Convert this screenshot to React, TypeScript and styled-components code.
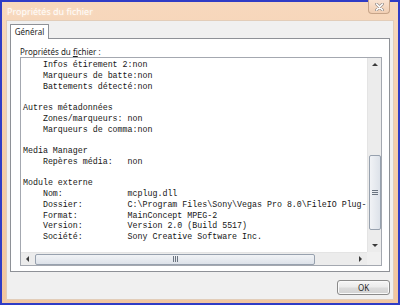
import React from "react";
import styled, { createGlobalStyle } from "styled-components";

const Global = createGlobalStyle`
  html, body { margin: 0; padding: 0; background: #fff; }
  #root { width: 400px; height: 305px; }
`;

const Window = styled.div`
  box-sizing: border-box;
  width: 400px;
  height: 305px;
  border: 2px solid #2f3cc6;
  background: linear-gradient(180deg, #f7d8bd 0%, #f3cba7 60%, #f1c6a0 100%);
  padding: 0 4px 3px 4px;
  display: flex;
  flex-direction: column;
  font-family: "Noto Sans", "DejaVu Sans", sans-serif;
`;

const TitleBar = styled.div`
  height: 18px;
  display: flex;
  align-items: flex-start;
  justify-content: space-between;
  flex: none;
`;

const Title = styled.div`
  margin-top: 4px;
  margin-left: 1px;
  font-size: 9px;
  line-height: 11px;
  color: rgba(255, 255, 255, 0.92);
  text-shadow: 0 0 3px rgba(255, 240, 225, 0.9);
`;

const CloseButton = styled.div`
  box-sizing: border-box;
  width: 22px;
  height: 14px;
  margin-top: -2px;
  margin-right: 4px;
  border: 1px solid #c7a488;
  border-top: none;
  border-radius: 0 0 4px 4px;
  background: linear-gradient(180deg, #f9e3d2, #f1cfb3);
  display: flex;
  align-items: center;
  justify-content: center;
`;

const Client = styled.div`
  flex: 1;
  background: #f0f0f0;
  box-shadow: inset 0 0 0 1px #e2cdb9;
  padding: 4px 4px 0 4px;
  display: flex;
  flex-direction: column;
`;

const TabRow = styled.div`
  display: flex;
  height: 14px;
  flex: none;
  position: relative;
  z-index: 1;
`;

const Tab = styled.div`
  box-sizing: border-box;
  width: 39px;
  height: 15px;
  border: 1px solid #8e9197;
  border-bottom: none;
  background: #fff;
  font-size: 8px;
  line-height: 13px;
  color: #1e1e1e;
  text-align: center;
  border-radius: 1px 1px 0 0;
`;

const Panel = styled.div`
  box-sizing: border-box;
  height: 234px;
  flex: none;
  border: 1px solid #8e9197;
  background: #fff;
  padding: 8px 7px 0 9px;
  display: flex;
  flex-direction: column;
`;

const Label = styled.div`
  height: 10px;
  font-size: 8px;
  line-height: 9px;
  color: #1e1e1e;
  u { text-decoration-thickness: 1px; text-underline-offset: 1px; }
`;

const ListBox = styled.div`
  box-sizing: border-box;
  height: 209px;
  border: 1px solid #a4a8b0;
  display: grid;
  grid-template-columns: 1fr 14px;
  grid-template-rows: 1fr 13px;
  background: #fff;
`;

const Viewport = styled.div`
  overflow: hidden;
  padding: 2px 0 0 2px;
  font-family: "Liberation Mono", "DejaVu Sans Mono", monospace;
  font-size: 8.3px;
  line-height: 10.75px;
  color: #161616;
  white-space: pre;
`;

const VScroll = styled.div`
  background: #ececec;
  border-left: 1px solid #e4e4e4;
  display: flex;
  flex-direction: column;
  align-items: center;
`;

const HScroll = styled.div`
  background: #ececec;
  border-top: 1px solid #e4e4e4;
  display: flex;
  align-items: center;
`;

const Corner = styled.div`
  background: #f0f0f0;
`;

const ArrowBox = styled.div`
  width: 13px;
  height: 13px;
  flex: none;
  display: flex;
  align-items: center;
  justify-content: center;
`;

const Track = styled.div<{ $vertical?: boolean }>`
  flex: 1;
  display: flex;
  flex-direction: ${(p) => (p.$vertical ? "column" : "row")};
  align-items: center;
`;

const Thumb = styled.div<{ $vertical?: boolean; $offset: number; $size: number }>`
  box-sizing: border-box;
  ${(p) =>
    p.$vertical
      ? `width: 12px; height: ${p.$size}px; margin-top: ${p.$offset}px;
         background: linear-gradient(90deg, #f1f3f6, #dde2e9);`
      : `height: 11px; width: ${p.$size}px; margin-left: ${p.$offset}px;
         background: linear-gradient(180deg, #f1f3f6, #dde2e9);`}
  border: 1px solid #97a1ae;
  border-radius: 2px;
  display: flex;
  align-items: center;
  justify-content: center;
`;

const Footer = styled.div`
  display: flex;
  justify-content: flex-end;
  padding-top: 8px;
`;

const OkButton = styled.div`
  box-sizing: border-box;
  width: 53px;
  height: 15px;
  border: 1px solid #8a8a8a;
  border-radius: 3px;
  background: linear-gradient(180deg, #f6f6f6 0%, #ebebeb 48%, #dcdcdc 52%, #d2d2d2 100%);
  box-shadow: inset 0 0 0 1px #fafafa;
  font-size: 8px;
  line-height: 13px;
  text-align: center;
  color: #1e1e1e;
`;

const Arrow = ({ dir }: { dir: "up" | "down" | "left" | "right" }) => {
  const pts = {
    up: "1,4 4,1 7,4",
    down: "1,1 4,4 7,1",
    left: "4,1 1,4 4,7",
    right: "1,1 4,4 1,7",
  }[dir];
  const vertical = dir === "up" || dir === "down";
  return (
    <svg width={vertical ? 8 : 5} height={vertical ? 5 : 8} viewBox={vertical ? "0 0 8 5" : "0 0 5 8"}>
      <polygon points={pts} fill="#3a3a3a" />
    </svg>
  );
};

const Grip = ({ vertical }: { vertical?: boolean }) => (
  <svg width={vertical ? 6 : 5} height={vertical ? 5 : 6} viewBox={vertical ? "0 0 6 5" : "0 0 5 6"}>
    {[0, 2, 4].map((i) =>
      vertical ? (
        <line key={i} x1="0" x2="6" y1={i + 0.5} y2={i + 0.5} stroke="#6b7480" strokeWidth="1" />
      ) : (
        <line key={i} y1="0" y2="6" x1={i + 0.5} x2={i + 0.5} stroke="#6b7480" strokeWidth="1" />
      )
    )}
  </svg>
);

const lines = [
  "    Infos étirement 2:non",
  "    Marqueurs de batte:non",
  "    Battements détecté:non",
  "",
  "Autres métadonnées",
  "    Zones/marqueurs: non",
  "    Marqueurs de comma:non",
  "",
  "Media Manager",
  "    Repères média:   non",
  "",
  "Module externe",
  "    Nom:             mcplug.dll",
  "    Dossier:         C:\\Program Files\\Sony\\Vegas Pro 8.0\\FileIO Plug-Ins\\mcplug\\",
  "    Format:          MainConcept MPEG-2",
  "    Version:         Version 2.0 (Build 5517)",
  "    Société:         Sony Creative Software Inc.",
];

export default function App() {
  return (
    <>
      <Global />
      <Window>
        <TitleBar>
          <Title>Propriétés du fichier</Title>
          <CloseButton>
            <svg width="9" height="8" viewBox="0 0 9 8">
              <path d="M1.5 1 L7.5 7 M7.5 1 L1.5 7" stroke="#9a8f88" strokeWidth="3" strokeLinecap="round" />
              <path d="M1.5 1 L7.5 7 M7.5 1 L1.5 7" stroke="#ffffff" strokeWidth="1.6" strokeLinecap="round" />
            </svg>
          </CloseButton>
        </TitleBar>
        <Client>
          <TabRow>
            <Tab>Général</Tab>
          </TabRow>
          <Panel>
            <Label>
              Propriétés du <u>f</u>ichier :
            </Label>
            <ListBox>
              <Viewport>{lines.join("\n")}</Viewport>
              <VScroll>
                <ArrowBox>
                  <Arrow dir="up" />
                </ArrowBox>
                <Track $vertical>
                  <Thumb $vertical $offset={84} $size={75}>
                    <Grip vertical />
                  </Thumb>
                </Track>
                <ArrowBox>
                  <Arrow dir="down" />
                </ArrowBox>
              </VScroll>
              <HScroll>
                <ArrowBox>
                  <Arrow dir="left" />
                </ArrowBox>
                <Track>
                  <Thumb $offset={1} $size={280}>
                    <Grip />
                  </Thumb>
                </Track>
                <ArrowBox>
                  <Arrow dir="right" />
                </ArrowBox>
              </HScroll>
              <Corner />
            </ListBox>
          </Panel>
          <Footer>
            <OkButton>OK</OkButton>
          </Footer>
        </Client>
      </Window>
    </>
  );
}
